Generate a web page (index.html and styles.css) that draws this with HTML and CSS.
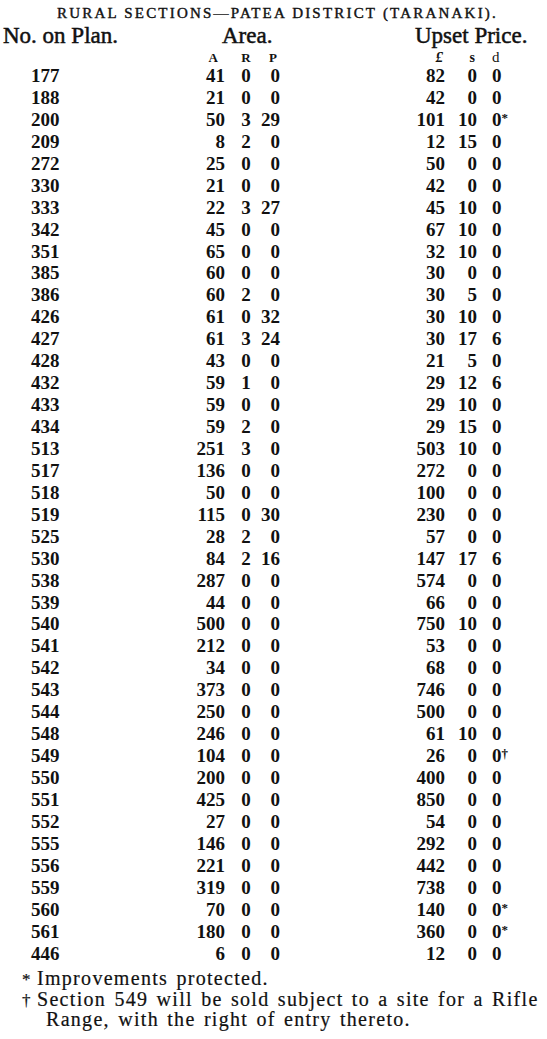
FILE: index.html
```html
<!DOCTYPE html>
<html>
<head>
<meta charset="utf-8">
<link rel="stylesheet" href="styles.css">
</head>
<body>
<div class="page">
  <div class="title">Rural Sections—Patea District (Taranaki).</div>
  <div class="head">
    <span class="h-no">No. on Plan.</span>
    <span class="h-area">Area.</span>
    <span class="h-price">Upset Price.</span>
  </div>
  <div class="row sub">
    <span class="no"></span><span class="a">A</span><span class="r">R</span><span class="p">P</span><span class="pl">£</span><span class="sh">s</span><span class="d">d</span>
  </div>
  <div class="rows">
    <div class="row"><span class="no">177</span><span class="a">41</span><span class="r">0</span><span class="p">0</span><span class="pl">82</span><span class="sh">0</span><span class="d">0</span></div>
    <div class="row"><span class="no">188</span><span class="a">21</span><span class="r">0</span><span class="p">0</span><span class="pl">42</span><span class="sh">0</span><span class="d">0</span></div>
    <div class="row"><span class="no">200</span><span class="a">50</span><span class="r">3</span><span class="p">29</span><span class="pl">101</span><span class="sh">10</span><span class="d">0<span class="mark">*</span></span></div>
    <div class="row"><span class="no">209</span><span class="a">8</span><span class="r">2</span><span class="p">0</span><span class="pl">12</span><span class="sh">15</span><span class="d">0</span></div>
    <div class="row"><span class="no">272</span><span class="a">25</span><span class="r">0</span><span class="p">0</span><span class="pl">50</span><span class="sh">0</span><span class="d">0</span></div>
    <div class="row"><span class="no">330</span><span class="a">21</span><span class="r">0</span><span class="p">0</span><span class="pl">42</span><span class="sh">0</span><span class="d">0</span></div>
    <div class="row"><span class="no">333</span><span class="a">22</span><span class="r">3</span><span class="p">27</span><span class="pl">45</span><span class="sh">10</span><span class="d">0</span></div>
    <div class="row"><span class="no">342</span><span class="a">45</span><span class="r">0</span><span class="p">0</span><span class="pl">67</span><span class="sh">10</span><span class="d">0</span></div>
    <div class="row"><span class="no">351</span><span class="a">65</span><span class="r">0</span><span class="p">0</span><span class="pl">32</span><span class="sh">10</span><span class="d">0</span></div>
    <div class="row"><span class="no">385</span><span class="a">60</span><span class="r">0</span><span class="p">0</span><span class="pl">30</span><span class="sh">0</span><span class="d">0</span></div>
    <div class="row"><span class="no">386</span><span class="a">60</span><span class="r">2</span><span class="p">0</span><span class="pl">30</span><span class="sh">5</span><span class="d">0</span></div>
    <div class="row"><span class="no">426</span><span class="a">61</span><span class="r">0</span><span class="p">32</span><span class="pl">30</span><span class="sh">10</span><span class="d">0</span></div>
    <div class="row"><span class="no">427</span><span class="a">61</span><span class="r">3</span><span class="p">24</span><span class="pl">30</span><span class="sh">17</span><span class="d">6</span></div>
    <div class="row"><span class="no">428</span><span class="a">43</span><span class="r">0</span><span class="p">0</span><span class="pl">21</span><span class="sh">5</span><span class="d">0</span></div>
    <div class="row"><span class="no">432</span><span class="a">59</span><span class="r">1</span><span class="p">0</span><span class="pl">29</span><span class="sh">12</span><span class="d">6</span></div>
    <div class="row"><span class="no">433</span><span class="a">59</span><span class="r">0</span><span class="p">0</span><span class="pl">29</span><span class="sh">10</span><span class="d">0</span></div>
    <div class="row"><span class="no">434</span><span class="a">59</span><span class="r">2</span><span class="p">0</span><span class="pl">29</span><span class="sh">15</span><span class="d">0</span></div>
    <div class="row"><span class="no">513</span><span class="a">251</span><span class="r">3</span><span class="p">0</span><span class="pl">503</span><span class="sh">10</span><span class="d">0</span></div>
    <div class="row"><span class="no">517</span><span class="a">136</span><span class="r">0</span><span class="p">0</span><span class="pl">272</span><span class="sh">0</span><span class="d">0</span></div>
    <div class="row"><span class="no">518</span><span class="a">50</span><span class="r">0</span><span class="p">0</span><span class="pl">100</span><span class="sh">0</span><span class="d">0</span></div>
    <div class="row"><span class="no">519</span><span class="a">115</span><span class="r">0</span><span class="p">30</span><span class="pl">230</span><span class="sh">0</span><span class="d">0</span></div>
    <div class="row"><span class="no">525</span><span class="a">28</span><span class="r">2</span><span class="p">0</span><span class="pl">57</span><span class="sh">0</span><span class="d">0</span></div>
    <div class="row"><span class="no">530</span><span class="a">84</span><span class="r">2</span><span class="p">16</span><span class="pl">147</span><span class="sh">17</span><span class="d">6</span></div>
    <div class="row"><span class="no">538</span><span class="a">287</span><span class="r">0</span><span class="p">0</span><span class="pl">574</span><span class="sh">0</span><span class="d">0</span></div>
    <div class="row"><span class="no">539</span><span class="a">44</span><span class="r">0</span><span class="p">0</span><span class="pl">66</span><span class="sh">0</span><span class="d">0</span></div>
    <div class="row"><span class="no">540</span><span class="a">500</span><span class="r">0</span><span class="p">0</span><span class="pl">750</span><span class="sh">10</span><span class="d">0</span></div>
    <div class="row"><span class="no">541</span><span class="a">212</span><span class="r">0</span><span class="p">0</span><span class="pl">53</span><span class="sh">0</span><span class="d">0</span></div>
    <div class="row"><span class="no">542</span><span class="a">34</span><span class="r">0</span><span class="p">0</span><span class="pl">68</span><span class="sh">0</span><span class="d">0</span></div>
    <div class="row"><span class="no">543</span><span class="a">373</span><span class="r">0</span><span class="p">0</span><span class="pl">746</span><span class="sh">0</span><span class="d">0</span></div>
    <div class="row"><span class="no">544</span><span class="a">250</span><span class="r">0</span><span class="p">0</span><span class="pl">500</span><span class="sh">0</span><span class="d">0</span></div>
    <div class="row"><span class="no">548</span><span class="a">246</span><span class="r">0</span><span class="p">0</span><span class="pl">61</span><span class="sh">10</span><span class="d">0</span></div>
    <div class="row"><span class="no">549</span><span class="a">104</span><span class="r">0</span><span class="p">0</span><span class="pl">26</span><span class="sh">0</span><span class="d">0<span class="mark">†</span></span></div>
    <div class="row"><span class="no">550</span><span class="a">200</span><span class="r">0</span><span class="p">0</span><span class="pl">400</span><span class="sh">0</span><span class="d">0</span></div>
    <div class="row"><span class="no">551</span><span class="a">425</span><span class="r">0</span><span class="p">0</span><span class="pl">850</span><span class="sh">0</span><span class="d">0</span></div>
    <div class="row"><span class="no">552</span><span class="a">27</span><span class="r">0</span><span class="p">0</span><span class="pl">54</span><span class="sh">0</span><span class="d">0</span></div>
    <div class="row"><span class="no">555</span><span class="a">146</span><span class="r">0</span><span class="p">0</span><span class="pl">292</span><span class="sh">0</span><span class="d">0</span></div>
    <div class="row"><span class="no">556</span><span class="a">221</span><span class="r">0</span><span class="p">0</span><span class="pl">442</span><span class="sh">0</span><span class="d">0</span></div>
    <div class="row"><span class="no">559</span><span class="a">319</span><span class="r">0</span><span class="p">0</span><span class="pl">738</span><span class="sh">0</span><span class="d">0</span></div>
    <div class="row"><span class="no">560</span><span class="a">70</span><span class="r">0</span><span class="p">0</span><span class="pl">140</span><span class="sh">0</span><span class="d">0<span class="mark">*</span></span></div>
    <div class="row"><span class="no">561</span><span class="a">180</span><span class="r">0</span><span class="p">0</span><span class="pl">360</span><span class="sh">0</span><span class="d">0<span class="mark">*</span></span></div>
    <div class="row"><span class="no">446</span><span class="a">6</span><span class="r">0</span><span class="p">0</span><span class="pl">12</span><span class="sh">0</span><span class="d">0</span></div>
  </div>
  <div class="notes">
    <div class="note n1"><span class="sym">*</span>Improvements protected.</div>
    <div class="note n2"><span class="sym">†</span>Section 549 will be sold subject to a site for a Rifle</div>
    <div class="note n3">Range, with the right of entry thereto.</div>
  </div>
</div>
</body>
</html>
```

FILE: styles.css
```css
html, body {
  margin: 0;
  padding: 0;
  background: #ffffff;
}
body {
  width: 547px;
  height: 1039px;
  overflow: hidden;
  color: #111111;
  font-family: "Liberation Serif", "Times New Roman", serif;
}
.page {
  padding-top: 3px;
}
.title {
  height: 20px;
  line-height: 20px;
  font-size: 15px;
  text-transform: uppercase;
  letter-spacing: 2.2px;
  text-align: center;
  padding-left: 8px;
  -webkit-text-stroke: 0.4px #111;
}
.head {
  display: flex;
  height: 23px;
  line-height: 23px;
  font-size: 23px;
  padding-left: 3px;
  margin-top: 1px;
  -webkit-text-stroke: 0.5px #111;
}
.h-no {
  width: 219px;
}
.h-area {
  width: 193px;
}
.row {
  display: grid;
  grid-template-columns: 154px 40px 35px 20px 165px 32px 1fr;
  padding-left: 31px;
  height: 21.95px;
  line-height: 21.95px;
  font-size: 19px;
  font-weight: bold;
}
.row .a, .row .p, .row .pl, .row .sh {
  text-align: right;
}
.row .r {
  text-align: center;
  padding-left: 7px;
}
.row .d {
  padding-left: 15px;
  white-space: nowrap;
}
.sub {
  margin-top: 3px;
  height: 15px;
  line-height: 15px;
  font-size: 13px;
}
.sub .a {
  padding-right: 7px;
}
.sub .p {
  text-align: center;
  padding-left: 6px;
}
.sub .pl {
  font-size: 15px;
  font-style: italic;
  padding-right: 2px;
}
.sub .sh {
  font-size: 14px;
  padding-right: 2px;
}
.sub .d {
  font-weight: normal;
  font-size: 15px;
}
.mark {
  font-size: 13px;
  vertical-align: 4px;
  line-height: 0;
}
.notes {
  margin-top: 4px;
  font-size: 20px;
  letter-spacing: 1.3px;
  word-spacing: 2px;
  -webkit-text-stroke: 0.2px #111;
}
.note {
  height: 20.5px;
  line-height: 20.5px;
  white-space: nowrap;
}
.n1, .n2 {
  padding-left: 22px;
}
.sym {
  display: inline-block;
  width: 15px;
  font-size: 17px;
  letter-spacing: 0;
}
.n3 {
  padding-left: 46px;
}
```
